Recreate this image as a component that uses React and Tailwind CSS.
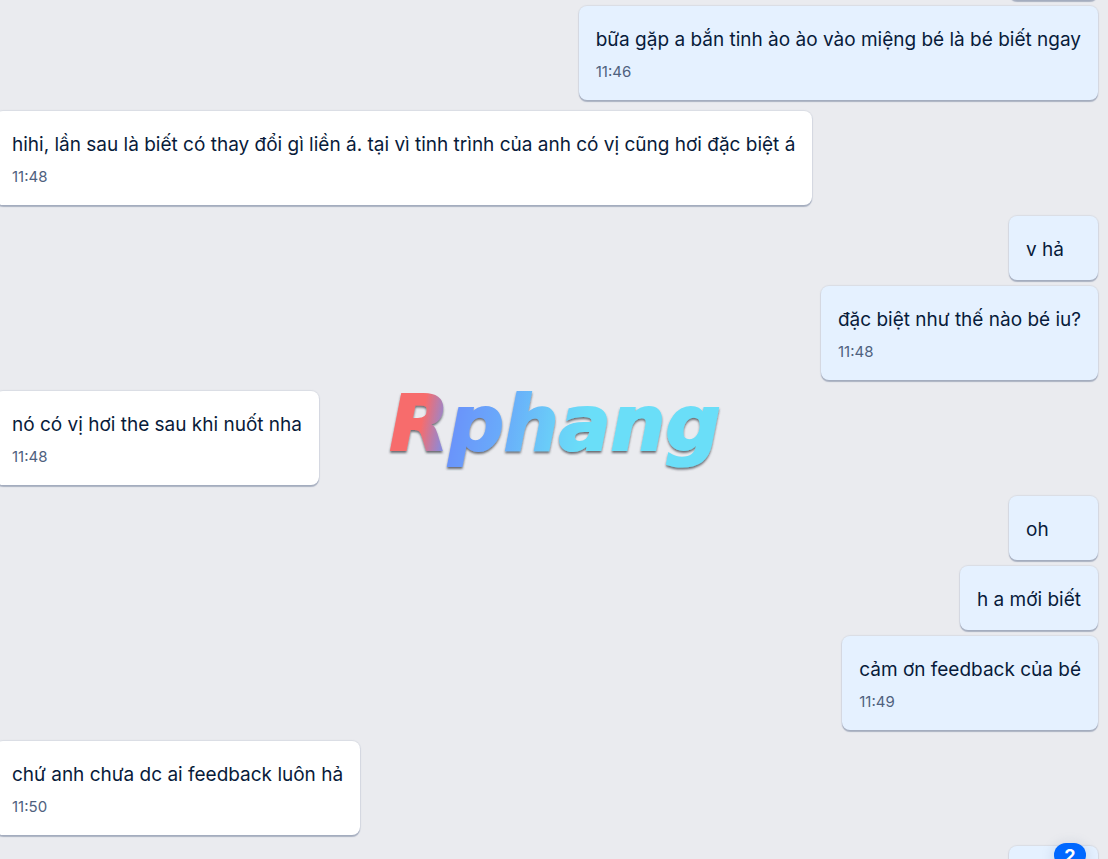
const messages = [
  { id: 1, mine: true, text: "", peek: true },
  { id: 2, mine: true, text: "bữa gặp a bắn tinh ào ào vào miệng bé là bé biết ngay", time: "11:46" },
  { id: 3, mine: false, text: "hihi, lần sau là biết có thay đổi gì liền á. tại vì tinh trình của anh có vị cũng hơi đặc biệt á", time: "11:48" },
  { id: 4, mine: true, text: "v hả" },
  { id: 5, mine: true, text: "đặc biệt như thế nào bé iu?", time: "11:48" },
  { id: 6, mine: false, text: "nó có vị hơi the sau khi nuốt nha", time: "11:48" },
  { id: 7, mine: true, text: "oh" },
  { id: 8, mine: true, text: "h a mới biết" },
  { id: 9, mine: true, text: "cảm ơn feedback của bé", time: "11:49" },
  { id: 10, mine: false, text: "chứ anh chưa dc ai feedback luôn hả", time: "11:50" },
  { id: 11, mine: true, text: "", badge: 2 },
];

function Bubble({ message, grouped }) {
  const { mine, text, time, badge, peek } = message;
  return (
    <li
      className={`flex ${mine ? "justify-end" : "justify-start"} ${
        peek ? "-mt-16" : grouped ? "mt-[6px]" : "mt-[11px]"
      }`}
    >
      <div
        className={`relative min-w-[89px] rounded-lg px-[17px] pt-[21px] pb-[18px] shadow-[0_0_1px_1px_rgba(100,115,145,0.12),0_2px_1px_0px_rgba(100,115,145,0.45)] ${
          mine ? "bg-[#e5f1ff]" : "-ml-[5px] bg-white"
        }`}
      >
        <p className="min-h-[25px] text-[19px] leading-[25px] text-[#081b3a]">{text}</p>
        {time && <time className="mt-[10px] block text-[15px] leading-5 text-[#4f617e]">{time}</time>}
        {badge && (
          <span className="absolute -top-[3px] right-3 flex h-6 w-8 items-center justify-center rounded-full bg-[#0068ff] text-[18px] font-bold text-white shadow-[0_2px_10px_4px_rgba(120,140,170,0.15)]">
            {badge}
          </span>
        )}
      </div>
    </li>
  );
}

function Watermark() {
  return (
    <div className="pointer-events-none absolute inset-0 flex items-center justify-center">
      <svg width="380" height="110" viewBox="0 0 380 110" role="img" aria-label="Rphang">
        <defs>
          <linearGradient id="brand" gradientUnits="userSpaceOnUse" x1="22" y1="14" x2="358" y2="74">
            <stop offset="0.12" stopColor="#f76c6c" />
            <stop offset="0.21" stopColor="#6b93fa" />
            <stop offset="0.36" stopColor="#69acfa" />
            <stop offset="0.5" stopColor="#6acdf8" />
            <stop offset="0.6" stopColor="#6adef8" />
          </linearGradient>
          <filter id="edge" x="-5%" y="-10%" width="110%" height="125%">
            <feDropShadow dx="0" dy="2" stdDeviation="0.8" floodColor="#33383f" floodOpacity="0.7" />
          </filter>
        </defs>
        <text
          x="191"
          y="75"
          textAnchor="middle"
          fontFamily="'DejaVu Sans', sans-serif"
          fontSize="77"
          fontWeight="700"
          fontStyle="italic"
          fill="url(#brand)"
          stroke="url(#brand)"
          strokeWidth="2"
          strokeLinejoin="miter"
          filter="url(#edge)"
        >
          Rphang
        </text>
      </svg>
    </div>
  );
}

export default function App() {
  return (
    <main className="relative h-screen overflow-hidden bg-[#eaebef] font-['Inter',sans-serif]">
      <ol className="flow-root pr-[10px]">
        {messages.map((message, i) => (
          <Bubble key={message.id} message={message} grouped={i > 0 && messages[i - 1].mine === message.mine} />
        ))}
      </ol>
      <Watermark />
    </main>
  );
}
